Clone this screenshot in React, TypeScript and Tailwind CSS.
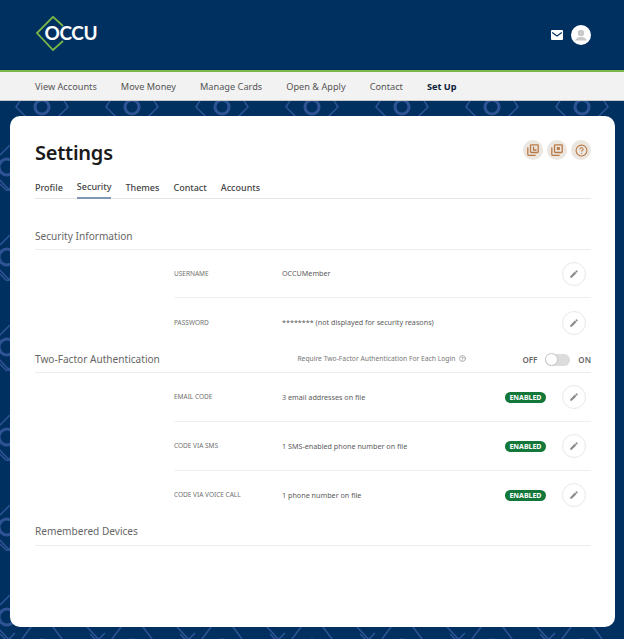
import { HelpCircle } from "lucide-react";

const font = { fontFamily: '"Noto Sans", sans-serif' };

const navItems = ["View Accounts", "Move Money", "Manage Cards", "Open & Apply", "Contact"];
const tabs = ["Profile", "Security", "Themes", "Contact", "Accounts"];

function PenButton() {
  return (
    <button className="flex h-6 w-6 shrink-0 items-center justify-center rounded-full border border-[#e8e8e8] bg-white">
      <svg viewBox="0 0 24 24" className="h-[10px] w-[10px] fill-[#8c8c8c]">
        <path d="M3 17.25V21h3.75L17.81 9.94l-3.75-3.75L3 17.25z" />
        <path d="M20.71 7.04a1 1 0 0 0 0-1.41l-2.34-2.34a1 1 0 0 0-1.41 0l-1.83 1.83 3.75 3.75 1.83-1.83z" />
      </svg>
    </button>
  );
}

function Row({ label, value, enabled, className }: { label: string; value: string; enabled?: boolean; className: string }) {
  return (
    <div className={`ml-[139px] flex items-center pr-[5px] ${className}`}>
      <div className="w-[108px] text-[6.5px] uppercase text-[#707070]">{label}</div>
      <div className="flex-1 text-[7.2px] text-[#5c5c5c]">{value}</div>
      {enabled && (
        <span className="mr-[16px] rounded-full bg-[#13773a] px-[4.5px] py-[1px] text-[7px] font-bold uppercase leading-[9px] text-white">
          Enabled
        </span>
      )}
      <PenButton />
    </div>
  );
}

function StackIcon({ kind }: { kind: "corner" | "square" }) {
  return (
    <div className="flex h-5 w-5 items-center justify-center rounded-full bg-[#ece6e0]">
      <svg viewBox="0 0 12 12" className="h-3 w-3 fill-none stroke-[#b87a45]" strokeWidth="1.3">
        <rect x="3.5" y="0.8" width="7.7" height="7.7" rx="0.8" />
        <path d="M0.8 3.5v7a0.8 0.8 0 0 0 0.8 0.8h7" />
        {kind === "corner" ? (
          <path d="M6.5 2.5v3.5h3" />
        ) : (
          <rect x="5.8" y="3" width="3" height="3" fill="#b87a45" stroke="none" />
        )}
      </svg>
    </div>
  );
}

export default function App() {
  return (
    <div className="flex h-[639px] w-[624px] flex-col overflow-hidden bg-[#00305f]" style={font}>
      <header className="flex h-[70px] shrink-0 items-center justify-between bg-[#00305f] pl-[34px] pr-[33px]">
        <div className="relative h-[38px] w-[66px]">
          <svg viewBox="0 0 66 38" className="absolute left-0 top-0 h-[38px] w-[66px] fill-none stroke-[#7ab648]" strokeWidth="1.8">
            <path d="M29 10 L19 0.8 L3 17 L19 34 L29 25" />
          </svg>
          <span className="absolute left-[10.5px] top-[2px] text-[19px] font-bold leading-[30px] tracking-[-0.4px] text-white" style={{ fontFamily: "Lato, sans-serif" }}>
            OCCU
          </span>
        </div>
        <div className="flex items-center gap-[8px]">
          <svg viewBox="0 0 12 10" className="h-[10px] w-[12px]">
            <rect width="12" height="10" rx="1" fill="#fff" />
            <path d="M1.2 2.5 L6 6 L10.8 2.5" fill="none" stroke="#00305f" strokeWidth="1.2" />
          </svg>
          <div className="flex h-5 w-5 items-center justify-center rounded-full bg-white">
            <svg viewBox="0 0 20 20" className="h-5 w-5 fill-[#c9c9c9]">
              <circle cx="10" cy="8" r="3.2" />
              <path d="M4.5 15.5c0-2.4 2.6-3.6 5.5-3.6s5.5 1.2 5.5 3.6z" />
            </svg>
          </div>
        </div>
      </header>

      <div className="h-[2px] shrink-0 bg-[#7ab648]" />

      <nav className="flex h-[29px] shrink-0 items-center gap-[24px] border-b border-[#c8c8c8] bg-[#f2f2f2] pl-[35px] pt-[1px] text-[9.2px] text-[#555]">
        {navItems.map((item) => (
          <span key={item}>{item}</span>
        ))}
        <span className="font-bold text-[#0b2238]">Set Up</span>
      </nav>

      <main className="relative flex-1 pb-[12px] pl-[10px] pr-[9px] pt-[15px]">
        <svg className="absolute inset-0 h-full w-full" aria-hidden="true">
          <defs>
            <pattern id="lattice" x="0" y="0" width="90" height="90" patternUnits="userSpaceOnUse">
              <g fill="none" stroke="#2f5394" strokeWidth="1.5">
                <circle cx="42" cy="6" r="7" strokeWidth="3" />
                <path d="M30 -16 L16 6 L34 24 M54 -16 L68 6 L50 24" />
                <circle cx="42" cy="96" r="7" strokeWidth="3" />
                <path d="M34 72 L16 96 L34 114 M50 72 L68 96 L50 114" />
                <circle cx="7" cy="66" r="8" strokeWidth="3" />
                <path d="M-12 66 L10 44 M-12 66 L10 90 M7 90 L-1 82 M7 90 L15 82" />
                <circle cx="97" cy="66" r="8" strokeWidth="3" />
                <path d="M78 66 L100 44 M78 66 L100 90" />
              </g>
            </pattern>
            <pattern id="latticeRight" x="0" y="0" width="90" height="90" patternUnits="userSpaceOnUse" patternTransform="translate(-20 0)">
              <g fill="none" stroke="#2f5394" strokeWidth="1.5">
                <circle cx="52" cy="66" r="8" strokeWidth="3" />
                <path d="M48 44 L72 66 L48 88" />
              </g>
            </pattern>
          </defs>
          <rect width="616" height="100%" fill="url(#lattice)" />
          <rect x="615" width="9" height="100%" fill="url(#latticeRight)" />
        </svg>

        <section className="relative h-full rounded-[10px] bg-white pl-[25px] pr-[24px] pt-[23px]">
          <div className="flex items-start justify-between">
            <h1 className="text-[20px] font-semibold leading-[28px] tracking-[-0.25px] text-[#1a1a1a]">Settings</h1>
            <div className="flex gap-[4px] pt-[1px]">
              <StackIcon kind="corner" />
              <StackIcon kind="square" />
              <div className="flex h-5 w-5 items-center justify-center rounded-full bg-[#ece6e0]">
                <HelpCircle size={13} className="text-[#b87a45]" />
              </div>
            </div>
          </div>

          <div className="mt-[10px] flex h-[22px] gap-[14px] border-b border-[#e8e8e8] text-[9px] font-medium text-[#444]">
            {tabs.map((tab) => (
              <span
                key={tab}
                className={`flex h-[22px] items-center ${tab === "Security" ? "border-b-2 border-[#7d97b5]" : ""}`}
              >
                {tab}
              </span>
            ))}
          </div>

          <h2 className="mt-[26px] flex h-[25px] items-center border-b border-[#ececec] text-[10.1px] text-[#666]">
            Security Information
          </h2>
          <Row label="Username" value="OCCUMember" className="h-[48px] border-b border-[#f0f0f0]" />
          <Row label="Password" value="******** (not displayed for security reasons)" className="h-[49px]" />

          <div className="flex h-[26px] items-center border-b border-[#ececec] text-[10.1px] text-[#666]">
            <span className="flex-1">Two-Factor Authentication</span>
            <span className="flex items-center text-[6.75px] text-[#777]">
              Require Two-Factor Authentication For Each Login
              <HelpCircle size={7} className="mb-[3px] ml-[4px]" />
            </span>
            <span className="ml-[56px] text-[8px] font-semibold text-[#666]">OFF</span>
            <span className="relative mx-[8px] h-[12px] w-[25px] rounded-full bg-[#dcdcdc]">
              <span className="absolute left-0 top-[-0.5px] h-[13px] w-[13px] rounded-full border border-[#c4c4c4] bg-white" />
            </span>
            <span className="text-[8px] font-semibold text-[#666]">ON</span>
          </div>
          <Row label="Email Code" value="3 email addresses on file" enabled className="h-[49px] border-b border-[#f0f0f0]" />
          <Row label="Code via SMS" value="1 SMS-enabled phone number on file" enabled className="h-[49px] border-b border-[#f0f0f0]" />
          <Row label="Code via Voice Call" value="1 phone number on file" enabled className="h-[48px]" />

          <h2 className="flex h-[27px] items-center border-b border-[#ececec] text-[10.1px] text-[#666]">
            Remembered Devices
          </h2>
        </section>
      </main>
    </div>
  );
}
